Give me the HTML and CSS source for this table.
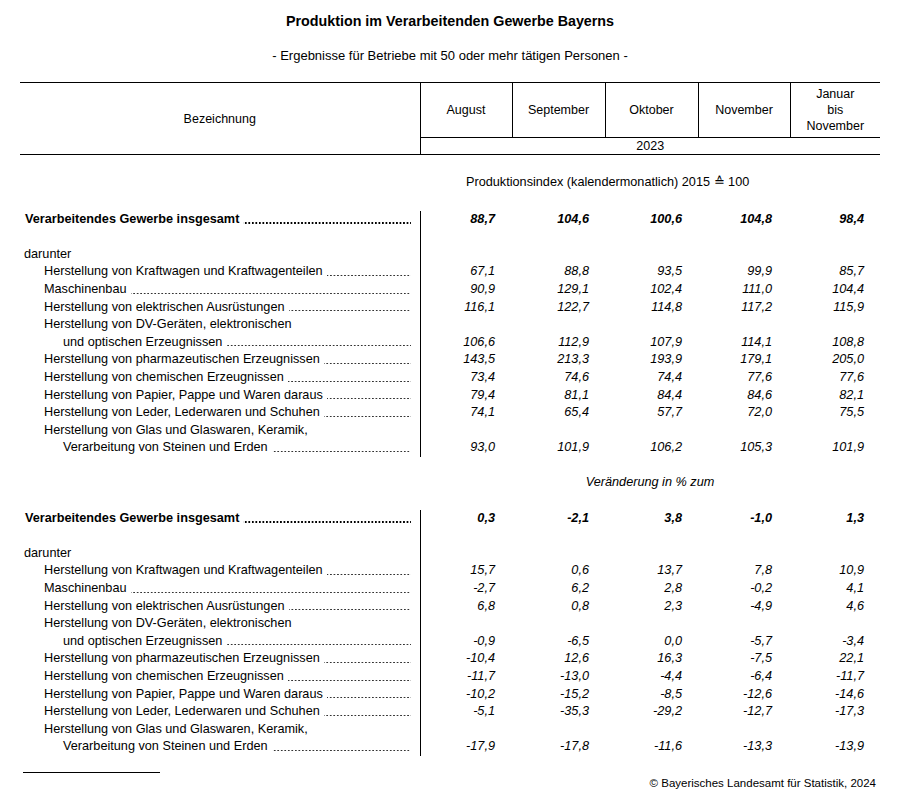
FILE: index.html
```html
<!DOCTYPE html>
<html lang="de">
<head>
<meta charset="utf-8">
<title>Produktion im Verarbeitenden Gewerbe Bayerns</title>
<link rel="stylesheet" href="styles.css">
</head>
<body>
<div class="page">
  <h1 class="title">Produktion im Verarbeitenden Gewerbe Bayerns</h1>
  <p class="subtitle">- Ergebnisse für Betriebe mit 50 oder mehr tätigen Personen -</p>

  <table class="tab">
    <colgroup>
      <col class="c-lab"><col class="c1"><col class="c2"><col class="c3"><col class="c4"><col class="c5">
    </colgroup>
    <thead>
      <tr class="hrow1">
        <th class="bez" rowspan="2">Bezeichnung</th>
        <th class="mon">August</th>
        <th class="mon">September</th>
        <th class="mon">Oktober</th>
        <th class="mon">November</th>
        <th class="mon">Januar<br>bis<br>November</th>
      </tr>
      <tr class="hrow2">
        <th class="year" colspan="5">2023</th>
      </tr>
    </thead>
    <tbody>
      <tr class="sp sp-a"><td colspan="6"></td></tr>
      <tr class="sec"><td></td><td colspan="5" class="sec-l">Produktionsindex (kalendermonatlich) 2015 ≙ 100</td></tr>
      <tr class="sp sp-b"><td colspan="6"></td></tr>
      <tr class="r tot"><td class="lab"><div class="ld l0"><span>Verarbeitendes Gewerbe insgesamt</span><span class="dots"></span></div></td><td class="n">88,7</td><td class="n">104,6</td><td class="n">100,6</td><td class="n">104,8</td><td class="n">98,4</td></tr>
      <tr class="r"><td class="lab"></td><td class="n"></td><td class="n"></td><td class="n"></td><td class="n"></td><td class="n"></td></tr>
      <tr class="r"><td class="lab"><div class="ld l0b">darunter</div></td><td class="n"></td><td class="n"></td><td class="n"></td><td class="n"></td><td class="n"></td></tr>
      <tr class="r"><td class="lab"><div class="ld l1"><span>Herstellung von Kraftwagen und Kraftwagenteilen</span><span class="dots"></span></div></td><td class="n">67,1</td><td class="n">88,8</td><td class="n">93,5</td><td class="n">99,9</td><td class="n">85,7</td></tr>
      <tr class="r"><td class="lab"><div class="ld l1"><span>Maschinenbau</span><span class="dots"></span></div></td><td class="n">90,9</td><td class="n">129,1</td><td class="n">102,4</td><td class="n">111,0</td><td class="n">104,4</td></tr>
      <tr class="r"><td class="lab"><div class="ld l1"><span>Herstellung von elektrischen Ausrüstungen</span><span class="dots"></span></div></td><td class="n">116,1</td><td class="n">122,7</td><td class="n">114,8</td><td class="n">117,2</td><td class="n">115,9</td></tr>
      <tr class="r"><td class="lab"><div class="ld l1">Herstellung von DV-Geräten, elektronischen</div></td><td class="n"></td><td class="n"></td><td class="n"></td><td class="n"></td><td class="n"></td></tr>
      <tr class="r"><td class="lab"><div class="ld l2"><span>und optischen Erzeugnissen</span><span class="dots"></span></div></td><td class="n">106,6</td><td class="n">112,9</td><td class="n">107,9</td><td class="n">114,1</td><td class="n">108,8</td></tr>
      <tr class="r"><td class="lab"><div class="ld l1"><span>Herstellung von pharmazeutischen Erzeugnissen</span><span class="dots"></span></div></td><td class="n">143,5</td><td class="n">213,3</td><td class="n">193,9</td><td class="n">179,1</td><td class="n">205,0</td></tr>
      <tr class="r"><td class="lab"><div class="ld l1"><span>Herstellung von chemischen Erzeugnissen</span><span class="dots"></span></div></td><td class="n">73,4</td><td class="n">74,6</td><td class="n">74,4</td><td class="n">77,6</td><td class="n">77,6</td></tr>
      <tr class="r"><td class="lab"><div class="ld l1"><span>Herstellung von Papier, Pappe und Waren daraus</span><span class="dots"></span></div></td><td class="n">79,4</td><td class="n">81,1</td><td class="n">84,4</td><td class="n">84,6</td><td class="n">82,1</td></tr>
      <tr class="r"><td class="lab"><div class="ld l1"><span>Herstellung von Leder, Lederwaren und Schuhen</span><span class="dots"></span></div></td><td class="n">74,1</td><td class="n">65,4</td><td class="n">57,7</td><td class="n">72,0</td><td class="n">75,5</td></tr>
      <tr class="r"><td class="lab"><div class="ld l1">Herstellung von Glas und Glaswaren, Keramik,</div></td><td class="n"></td><td class="n"></td><td class="n"></td><td class="n"></td><td class="n"></td></tr>
      <tr class="r"><td class="lab"><div class="ld l2"><span>Verarbeitung von Steinen und Erden</span><span class="dots"></span></div></td><td class="n">93,0</td><td class="n">101,9</td><td class="n">106,2</td><td class="n">105,3</td><td class="n">101,9</td></tr>

      <tr class="sp"><td colspan="6"></td></tr>
      <tr class="sec"><td></td><td colspan="5" class="sec-c">Veränderung in % zum</td></tr>
      <tr class="sp"><td colspan="6"></td></tr>
      <tr class="r tot"><td class="lab"><div class="ld l0"><span>Verarbeitendes Gewerbe insgesamt</span><span class="dots"></span></div></td><td class="n">0,3</td><td class="n">-2,1</td><td class="n">3,8</td><td class="n">-1,0</td><td class="n">1,3</td></tr>
      <tr class="r"><td class="lab"></td><td class="n"></td><td class="n"></td><td class="n"></td><td class="n"></td><td class="n"></td></tr>
      <tr class="r"><td class="lab"><div class="ld l0b">darunter</div></td><td class="n"></td><td class="n"></td><td class="n"></td><td class="n"></td><td class="n"></td></tr>
      <tr class="r"><td class="lab"><div class="ld l1"><span>Herstellung von Kraftwagen und Kraftwagenteilen</span><span class="dots"></span></div></td><td class="n">15,7</td><td class="n">0,6</td><td class="n">13,7</td><td class="n">7,8</td><td class="n">10,9</td></tr>
      <tr class="r"><td class="lab"><div class="ld l1"><span>Maschinenbau</span><span class="dots"></span></div></td><td class="n">-2,7</td><td class="n">6,2</td><td class="n">2,8</td><td class="n">-0,2</td><td class="n">4,1</td></tr>
      <tr class="r"><td class="lab"><div class="ld l1"><span>Herstellung von elektrischen Ausrüstungen</span><span class="dots"></span></div></td><td class="n">6,8</td><td class="n">0,8</td><td class="n">2,3</td><td class="n">-4,9</td><td class="n">4,6</td></tr>
      <tr class="r"><td class="lab"><div class="ld l1">Herstellung von DV-Geräten, elektronischen</div></td><td class="n"></td><td class="n"></td><td class="n"></td><td class="n"></td><td class="n"></td></tr>
      <tr class="r"><td class="lab"><div class="ld l2"><span>und optischen Erzeugnissen</span><span class="dots"></span></div></td><td class="n">-0,9</td><td class="n">-6,5</td><td class="n">0,0</td><td class="n">-5,7</td><td class="n">-3,4</td></tr>
      <tr class="r"><td class="lab"><div class="ld l1"><span>Herstellung von pharmazeutischen Erzeugnissen</span><span class="dots"></span></div></td><td class="n">-10,4</td><td class="n">12,6</td><td class="n">16,3</td><td class="n">-7,5</td><td class="n">22,1</td></tr>
      <tr class="r"><td class="lab"><div class="ld l1"><span>Herstellung von chemischen Erzeugnissen</span><span class="dots"></span></div></td><td class="n">-11,7</td><td class="n">-13,0</td><td class="n">-4,4</td><td class="n">-6,4</td><td class="n">-11,7</td></tr>
      <tr class="r"><td class="lab"><div class="ld l1"><span>Herstellung von Papier, Pappe und Waren daraus</span><span class="dots"></span></div></td><td class="n">-10,2</td><td class="n">-15,2</td><td class="n">-8,5</td><td class="n">-12,6</td><td class="n">-14,6</td></tr>
      <tr class="r"><td class="lab"><div class="ld l1"><span>Herstellung von Leder, Lederwaren und Schuhen</span><span class="dots"></span></div></td><td class="n">-5,1</td><td class="n">-35,3</td><td class="n">-29,2</td><td class="n">-12,7</td><td class="n">-17,3</td></tr>
      <tr class="r"><td class="lab"><div class="ld l1">Herstellung von Glas und Glaswaren, Keramik,</div></td><td class="n"></td><td class="n"></td><td class="n"></td><td class="n"></td><td class="n"></td></tr>
      <tr class="r"><td class="lab"><div class="ld l2"><span>Verarbeitung von Steinen und Erden</span><span class="dots"></span></div></td><td class="n">-17,9</td><td class="n">-17,8</td><td class="n">-11,6</td><td class="n">-13,3</td><td class="n">-13,9</td></tr>
    </tbody>
  </table>

  <div class="foot">
    <div class="footline"></div>
    <p class="copy">© Bayerisches Landesamt für Statistik, 2024</p>
  </div>
</div>
</body>
</html>
```

FILE: styles.css
```css
html, body {
  margin: 0;
  padding: 0;
  background: #fff;
}

body {
  font-family: "Liberation Sans", Arial, sans-serif;
  font-size: 12.7px;
  color: #000;
}

.page {
  width: 860px;
  padding: 12px 18px 0 20px;
}

.title {
  margin: 0;
  font-size: 14.3px;
  font-weight: bold;
  line-height: 18px;
  text-align: center;
}

.subtitle {
  margin: 18px 0 0;
  font-size: 13px;
  line-height: 16px;
  text-align: center;
}

.tab {
  margin-top: 18px;
  width: 860px;
  border-collapse: collapse;
  table-layout: fixed;
  border-top: 1px solid #000;
}

.c-lab { width: 400px; }
.c1 { width: 92px; }
.c2 { width: 93px; }
.c3 { width: 93px; }
.c4 { width: 92px; }
.c5 { width: 90px; }

.tab th {
  font-weight: normal;
  font-size: 12.5px;
  line-height: 16px;
  padding: 0;
}

.hrow1 { height: 55px; }
.hrow2 { height: 17px; }

.bez {
  text-align: center;
  vertical-align: middle;
  border-bottom: 1px solid #000;
  padding-top: 2px;
}

.mon {
  border-left: 1px solid #000;
  text-align: center;
  vertical-align: middle;
}

.year {
  border-left: 1px solid #000;
  border-top: 1px solid #000;
  border-bottom: 1px solid #000;
  text-align: center;
  line-height: 16px;
}

.tab td {
  padding: 0;
  line-height: 17.6px;
  height: 17.6px;
  white-space: nowrap;
}

.sp td { height: 17.6px; }
.sp-a td { height: 18.8px; }
.sp-b td { height: 19.2px; }

.sec-l {
  padding-left: 46px !important;
  text-align: left;
}

.sec-c {
  text-align: center;
  font-style: italic;
}

.lab {
  padding-right: 9px !important;
}

.ld {
  display: flex;
  height: 17.6px;
}

.ld > span:first-child {
  flex: none;
}

.l0 { padding-left: 5px; }
.l0b { padding-left: 4px; }
.l1 { padding-left: 24px; }
.l2 { padding-left: 43px; }

.dots {
  flex: 1 1 auto;
  min-width: 0;
  margin-left: 4px;
  background-image: linear-gradient(to right, #333 0, #333 1.4px, transparent 1.4px);
  background-size: 3.53px 1.4px;
  background-repeat: repeat-x;
  background-position: right 0 top 11.6px;
}

.tot .dots {
  background-image: linear-gradient(to right, #000 0, #000 1.9px, transparent 1.9px);
  background-size: 3.53px 1.9px;
  background-position: right 0 top 11.2px;
}

.n {
  text-align: right;
  font-style: italic;
}

.r .n:nth-child(2) {
  border-left: 1px solid #000;
  padding-right: 17px;
}
.r .n:nth-child(3) { padding-right: 16px; }
.r .n:nth-child(4) { padding-right: 16px; }
.r .n:nth-child(5) { padding-right: 18px; }
.r .n:nth-child(6) { padding-right: 16px; }

.tot td {
  font-weight: bold;
}

.foot {
  margin-top: 16px;
}

.footline {
  width: 137px;
  margin-left: 3px;
  border-top: 1px solid #000;
}

.copy {
  margin: 4px 0 0;
  font-size: 11.5px;
  line-height: 13px;
  text-align: right;
  padding-right: 4px;
}
```
